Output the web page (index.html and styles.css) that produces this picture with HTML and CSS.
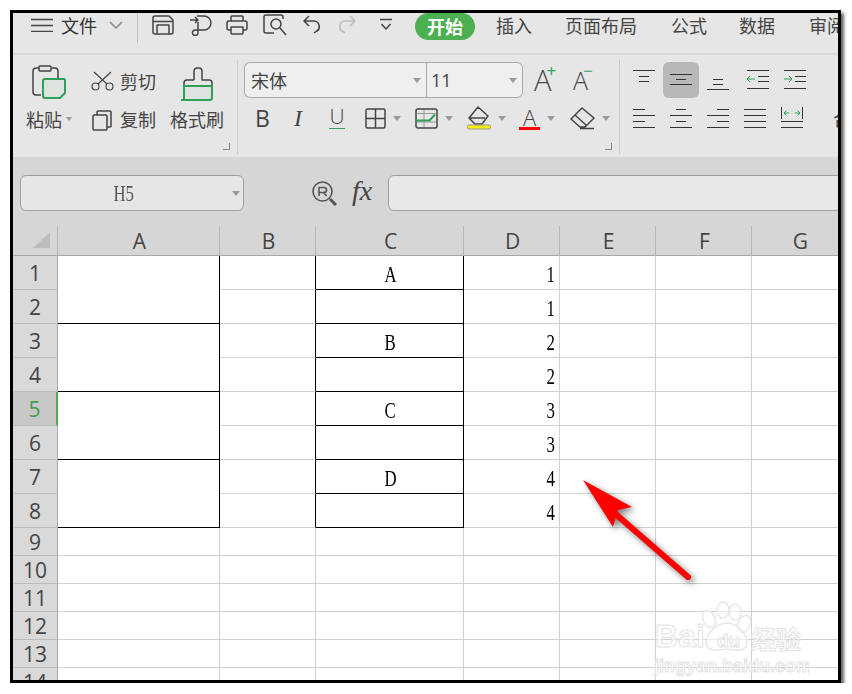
FILE: index.html
```html
<!DOCTYPE html>
<html lang="zh-CN">
<head>
<meta charset="utf-8">
<title>WPS 表格</title>
<link rel="stylesheet" href="styles.css">
</head>
<body>
<div class="frame">
  <header class="titlebar">
    <svg class="ic slot-menu" width="22" height="14" viewBox="0 0 22 14"><path d="M0 1.500h22M0 7.500h22M0 13.500h22"/></svg>
    <span class="file">文件</span>
    <svg class="ic soft" width="14" height="8" viewBox="0 0 14 8"><path d="M1 1l6 6 6-6"/></svg>
    <span class="title-sep"></span>
    <svg class="ic" width="22" height="20" viewBox="0 0 22 20"><path d="M3 1h14l4 4v12a2 2 0 0 1-2 2H3a2 2 0 0 1-2-2V3a2 2 0 0 1 2-2zM1.500 6.500h19M5 19v-9h12v9"/></svg>
    <svg class="ic" width="24" height="22" viewBox="0 0 24 22"><path d="M8 2h7a7 7 0 0 1 0 14H6a2.800 2.800 0 1 0 3 2.500V8M1 6h8M6 3l3 3-3 3"/></svg>
    <svg class="ic" width="22" height="20" viewBox="0 0 22 20"><path d="M5 6V2a1 1 0 0 1 1-1h10a1 1 0 0 1 1 1v4M5 15H3a2 2 0 0 1-2-2V8a2 2 0 0 1 2-2h16a2 2 0 0 1 2 2v5a2 2 0 0 1-2 2h-2M5 12h12v6a1 1 0 0 1-1 1H6a1 1 0 0 1-1-1z"/></svg>
    <svg class="ic" width="24" height="22" viewBox="0 0 24 22"><path d="M20 5V3a2 2 0 0 0-2-2H3a2 2 0 0 0-2 2v14a2 2 0 0 0 2 2h8"/><circle cx="13" cy="10" r="5"/><path d="M17 14l6 7"/></svg>
    <svg class="ic" width="18" height="19" viewBox="0 0 18 19"><path d="M6 1L1 6l5 5M1 6h10a5.500 5.500 0 0 1 2 10.500L11 18"/></svg>
    <svg class="ic faint" width="18" height="19" viewBox="0 0 18 19"><path d="M12 1l5 5-5 5M17 6H7a5.500 5.500 0 0 0-2 10.500L7 18"/></svg>
    <svg class="ic" width="12" height="14" viewBox="0 0 12 14"><path d="M0 1.500h12M1.500 6l4.500 5 4.500-5"/></svg>
    <span class="pill">开始</span>
    <span class="tab">插入</span>
    <span class="tab">页面布局</span>
    <span class="tab">公式</span>
    <span class="tab">数据</span>
    <span class="tab tab-cut">审阅</span>
  </header>

  <section class="ribbon">
    <div class="group group-clip">
      <svg class="ic big-paste" width="36" height="36" viewBox="0 0 36 36"><path d="M9 30H4a3 3 0 0 1-3-3V6a3 3 0 0 1 3-3h3M20 3h3a3 3 0 0 1 3 3v7M7 2a1 1 0 0 1 1-1h10a1 1 0 0 1 1 1v3a1 1 0 0 1-1 1H8a1 1 0 0 1-1-1z"/><path class="green" d="M13 14h19a1 1 0 0 1 1 1v13l-5 5H13a2 2 0 0 1-2-2V16a2 2 0 0 1 2-2z"/></svg>
      <div class="inline-tool"><svg class="ic thin" width="23" height="20" viewBox="0 0 23 20"><circle cx="4.500" cy="15.500" r="3.500"/><circle cx="18.500" cy="15.500" r="3.500"/><path d="M7 13L20 1M16 13L3 1"/></svg><span class="rb-text">剪切</span></div>
      <svg class="ic big-brush" width="34" height="34" viewBox="0 0 34 34"><path d="M13 13V4a3 3 0 0 1 3-3h2a3 3 0 0 1 3 3v9h7a3 3 0 0 1 3 3v3M13 13H6a3 3 0 0 0-3 3v3"/><path class="green" d="M3 19h28v12a2 2 0 0 1-2 2H3zM0 33h4"/></svg>
      <div class="paste-label"><span class="rb-text">粘贴</span><i class="caret caret-small"></i></div>
      <div class="inline-tool copy-tool"><svg class="ic" width="20" height="21" viewBox="0 0 20 21"><path d="M5 5V2a1 1 0 0 1 1-1h12a1 1 0 0 1 1 1v14a1 1 0 0 1-1 1h-3M2 5h12a1 1 0 0 1 1 1v13a1 1 0 0 1-1 1H2a1 1 0 0 1-1-1V6a1 1 0 0 1 1-1z"/></svg><span class="rb-text">复制</span></div>
      <span class="rb-text">格式刷</span>
      <span class="corner"></span>
    </div>

    <div class="group group-font">
      <div class="font-row">
        <div class="select select-font"><span>宋体</span><i class="caret"></i></div>
        <div class="select select-size"><span>11</span><i class="caret"></i></div>
        <span class="grow grow-up">A<sup class="grow-mark">+</sup></span>
        <span class="grow grow-down">A<sup class="grow-mark">−</sup></span>
      </div>
      <div class="format-row">
        <span class="fmt fmt-b">B</span>
        <span class="fmt fmt-i">I</span>
        <span class="fmt fmt-u">U</span>
        <div class="fmt-pair"><svg class="ic" width="21" height="21" viewBox="0 0 21 21"><rect x="1" y="1" width="19" height="19" rx="1.500"/><path d="M10.500 1v19M1 10.500h19"/></svg><i class="caret"></i></div>
        <div class="fmt-pair"><svg class="ic" width="23" height="21" viewBox="0 0 23 21"><path class="gridline" d="M9 1v19M2 5.500h19M2 14h19"/><path d="M16 20H3a2 2 0 0 1-2-2V3a2 2 0 0 1 2-2h17a2 2 0 0 1 2 2v15a2 2 0 0 1-2 2z"/><path class="green-line" d="M0 12.500h14.500L20 6.500"/></svg><i class="caret"></i></div>
        <div class="fmt-pair"><svg class="ic" width="24" height="24" viewBox="0 0 24 24"><path d="M11 1l10 9-6 8H8l-6-6zM2 12h16"/><rect class="yellow" x="0.500" y="19" width="23" height="4" rx="1.500"/></svg><i class="caret"></i></div>
        <div class="fmt-pair"><span class="fmt-color">A</span><i class="caret"></i></div>
        <div class="fmt-pair"><svg class="ic" width="25" height="23" viewBox="0 0 25 23"><path d="M12 1l12 10-9 9H10L1 12zM5 8l11 10M10 21.500h14"/></svg><i class="caret"></i></div>
      </div>
      <span class="corner"></span>
    </div>

    <div class="group-align">
      <div class="align-row">
        <svg class="al" width="36" height="36" viewBox="0 0 36 36"><path d="M7 8.500h22M13 14.500h10M13 19.500h10"/></svg>
        <svg class="al al-on" width="36" height="36" viewBox="0 0 36 36"><path d="M7 12.500h22M13 17.500h10M7 22.500h22"/></svg>
        <svg class="al" width="36" height="36" viewBox="0 0 36 36"><path d="M13 17.500h10M13 22.500h10M7 27.500h22"/></svg>
        <svg class="al al-gap" width="36" height="36" viewBox="0 0 36 36"><path d="M7 8.500h22M18 14.500h11M18 19.500h11M7 26.500h22"/><path class="green-thin" d="M7 17h8M10 14l-3 3 3 3"/></svg>
        <svg class="al" width="36" height="36" viewBox="0 0 36 36"><path d="M7 8.500h22M18 14.500h11M18 19.500h11M7 26.500h22"/><path class="green-thin" d="M7 17h8M12 14l3 3-3 3"/></svg>
      </div>
      <div class="align-row">
        <svg class="al" width="36" height="36" viewBox="0 0 36 36"><path d="M7 9.500h12M7 15.500h22M7 21.500h12M7 27.500h22"/></svg>
        <svg class="al" width="36" height="36" viewBox="0 0 36 36"><path d="M13 9.500h10M7 15.500h22M13 21.500h10M7 27.500h22"/></svg>
        <svg class="al" width="36" height="36" viewBox="0 0 36 36"><path d="M17 9.500h12M7 15.500h22M17 21.500h12M7 27.500h22"/></svg>
        <svg class="al" width="36" height="36" viewBox="0 0 36 36"><path d="M7 9.500h22M7 15.500h22M7 21.500h22M7 27.500h22"/></svg>
        <svg class="al" width="36" height="36" viewBox="0 0 36 36"><path d="M7.500 7v12M28.500 7v12M7 21.500h22M7 27.500h22"/><path class="green-thin" d="M10 13h5M12.500 10.500l-2.500 2.500 2.500 2.500M21 13h5M23.500 10.500l2.500 2.500-2.500 2.500"/></svg>
        <span class="merge-cut">合</span>
      </div>
    </div>
  </section>

  <section class="formula">
    <div class="namebox"><span class="name-val"><span class="narrow">H5</span></span><i class="caret"></i></div>
    <svg class="ic lens" width="25" height="25" viewBox="0 0 25 25"><circle cx="10.500" cy="10.500" r="9.500"/><path class="lens-h" d="M18 18l6 6"/><path d="M7 15V6.500h5a2.500 2.500 0 0 1 0 5H7M11.500 11.500L14.500 15"/></svg>
    <span class="fx">fx</span>
    <div class="fx-input"></div>
  </section>

  <table class="sheet">
    <colgroup><col class="c-h"><col class="c-a"><col class="c-n"><col class="c-c"><col class="c-n"><col class="c-n"><col class="c-n"><col class="c-n"></colgroup>
    <thead>
      <tr class="r-head"><th class="corner-cell"><i class="tri"></i></th><th>A</th><th>B</th><th>C</th><th>D</th><th>E</th><th>F</th><th>G</th></tr>
    </thead>
    <tbody>
      <tr class="r-big"><th>1</th><td class="ink" rowspan="2"></td><td class="ink-r"></td><td class="ink val-c"><span class="narrow">A</span></td><td class="val-n"><span class="narrow narrow-r">1</span></td><td></td><td></td><td></td></tr>
      <tr class="r-big"><th>2</th><td class="ink-r"></td><td class="ink"></td><td class="val-n"><span class="narrow narrow-r">1</span></td><td></td><td></td><td></td></tr>
      <tr class="r-big"><th>3</th><td class="ink" rowspan="2"></td><td class="ink-r"></td><td class="ink val-c"><span class="narrow">B</span></td><td class="val-n"><span class="narrow narrow-r">2</span></td><td></td><td></td><td></td></tr>
      <tr class="r-big"><th>4</th><td class="ink-r"></td><td class="ink"></td><td class="val-n"><span class="narrow narrow-r">2</span></td><td></td><td></td><td></td></tr>
      <tr class="r-big"><th class="row-on">5</th><td class="ink" rowspan="2"></td><td class="ink-r"></td><td class="ink val-c"><span class="narrow">C</span></td><td class="val-n"><span class="narrow narrow-r">3</span></td><td></td><td></td><td></td></tr>
      <tr class="r-big"><th>6</th><td class="ink-r"></td><td class="ink"></td><td class="val-n"><span class="narrow narrow-r">3</span></td><td></td><td></td><td></td></tr>
      <tr class="r-big"><th>7</th><td class="ink" rowspan="2"></td><td class="ink-r"></td><td class="ink val-c"><span class="narrow">D</span></td><td class="val-n"><span class="narrow narrow-r">4</span></td><td></td><td></td><td></td></tr>
      <tr class="r-big"><th>8</th><td class="ink-r"></td><td class="ink"></td><td class="val-n"><span class="narrow narrow-r">4</span></td><td></td><td></td><td></td></tr>
      <tr class="r-small"><th>9</th><td></td><td></td><td></td><td></td><td></td><td></td><td></td></tr>
      <tr class="r-small"><th>10</th><td></td><td></td><td></td><td></td><td></td><td></td><td></td></tr>
      <tr class="r-small"><th>11</th><td></td><td></td><td></td><td></td><td></td><td></td><td></td></tr>
      <tr class="r-small"><th>12</th><td></td><td></td><td></td><td></td><td></td><td></td><td></td></tr>
      <tr class="r-small"><th>13</th><td></td><td></td><td></td><td></td><td></td><td></td><td></td></tr>
      <tr class="r-small"><th>14</th><td></td><td></td><td></td><td></td><td></td><td></td><td></td></tr>
    </tbody>
  </table>

  <svg class="arrow" width="130" height="120" viewBox="0 0 130 120">
    <path class="arrow-line" d="M28 30L105 97"/>
    <path class="arrow-head" d="M0 0L49 27 35 30 30 47z"/>
  </svg>

  <svg class="mark" width="165" height="85" viewBox="0 0 165 85">
    <g class="paw">
      <ellipse cx="64" cy="24" rx="6" ry="9" transform="rotate(-25 64 24)"/>
      <ellipse cx="78" cy="15" rx="6" ry="8"/>
      <ellipse cx="90" cy="17" rx="6" ry="8"/>
      <ellipse cx="99" cy="29" rx="6" ry="9" transform="rotate(25 99 29)"/>
      <path d="M82 28c10 0 20 11 20 19 0 6-5 9-10 8-6-1-13-1-20 0-6 1-11-2-11-8 0-8 11-19 21-19z"/>
    </g>
    <text class="mk mk-bai" x="10" y="52">Bai</text>
    <text class="mk mk-du" x="72" y="52">du</text>
    <text class="mk mk-cn" x="106" y="54">经验</text>
    <text class="mk mk-url" x="9" y="77">jingyan.baidu.com</text>
  </svg>
</div>
</body>
</html>
```

FILE: styles.css
```css
* { box-sizing: border-box; }
html, body { margin: 0; padding: 0; background: #fff; }
body {
  font-family: "Noto Sans CJK SC", "Noto Sans", sans-serif;
  color: #444;
}
.frame {
  position: relative;
  width: 831px;
  height: 673px;
  margin: 10px 0 0 10px;
  border: 3px solid #000;
  box-shadow: 3px 3px 3px #666;
  overflow: hidden;
  background: #fff;
}

/* shared icon strokes */
.ic { fill: none; stroke: #444; stroke-width: 1.500; stroke-linejoin: round; display: block; }
.ic.soft { stroke: #888; }
.ic.faint { stroke: #bbb; }
.ic.thin { stroke-width: 1.200; }
.ic .green { fill: #dde3df; stroke: #2ea05a; stroke-width: 2; }
.ic .green-line { stroke: #2ea05a; stroke-width: 2; }
.ic .gridline { stroke: #999; stroke-width: 1; }
.ic .yellow { fill: #ffee00; stroke: #999; stroke-width: 1; }
.caret {
  display: block;
  flex: none;
  width: 0;
  height: 0;
  border-left: 4px solid transparent;
  border-right: 4px solid transparent;
  border-top: 5px solid #999;
}
.caret-small { border-left-width: 3.500px; border-right-width: 3.500px; border-top-width: 4px; }

/* title bar */
.titlebar {
  display: grid;
  grid-template-columns: 30px 48px 28px 15px 37px 37px 37px 40px 35px 42px 35px 81px 69px 106px 68px 70px 60px;
  grid-template-rows: 23px;
  align-items: center;
  height: 42px;
  padding: 0 0 17px 18px;
  background: #e6e6e6;
  border-bottom: 2px solid #d8d8d8;
  font-size: 18px;
  line-height: 23px;
}
.file { color: #333; margin-top: 2px; }
.title-sep { align-self: start; width: 1px; height: 30px; background: #c4c4c4; }
.pill {
  align-self: start;
  width: 60px;
  height: 27px;
  border-radius: 14px;
  background: #4caf50;
  color: #fff;
  font-weight: 700;
  text-align: center;
  line-height: 27px;
}
.tab { color: #444; white-space: nowrap; margin-top: 2px; }
.tab-cut { width: 60px; }

/* ribbon */
.ribbon { display: flex; height: 102px; background: #e6e6e6; }
.group {
  position: relative;
  height: 94px;
  margin-top: 5px;
  padding-top: 2px;
  border-right: 1px solid #ccc;
}
.corner {
  position: absolute;
  right: 7px;
  bottom: 4px;
  width: 7px;
  height: 7px;
  border-right: 1px solid #888;
  border-bottom: 1px solid #888;
}
.rb-text { font-size: 18px; line-height: 24px; color: #444; white-space: nowrap; }

.group-clip {
  display: grid;
  width: 225px;
  grid-template-columns: 78px 79px 67px;
  grid-template-rows: 38px 38px;
  align-items: center;
}
.big-paste { margin: 4px 0 0 19px; }
.big-brush { margin: 6px 0 0 11px; }
.inline-tool { display: flex; align-items: center; gap: 6px; }
.copy-tool { gap: 8px; margin-left: 1px; }
.copy-tool .ic { margin-top: 3px; }
.paste-label { display: flex; align-items: center; gap: 4px; padding-left: 13px; }

.group-font { width: 382px; padding-left: 6px; }
.font-row { display: flex; align-items: center; height: 36px; }
.select {
  display: flex;
  align-items: center;
  justify-content: space-between;
  flex: none;
  height: 36px;
  padding: 0 5px 0 6px;
  background: #efefef;
  border: 1px solid #aaa;
  font-size: 18px;
  color: #444;
}
.select-font { width: 182px; border-right: 0; border-radius: 6px 0 0 6px; }
.select-size { width: 97px; padding-left: 4px; border-radius: 0 6px 6px 0; font-family: "Open Sans", sans-serif; }
.grow {
  position: relative;
  font-family: "Open Sans", sans-serif;
  font-weight: 300;
  color: #444;
  line-height: 36px;
}
.grow-up { margin-left: 11px; width: 39px; font-size: 29px; }
.grow-down { font-size: 25px; }
.grow-mark {
  position: absolute;
  top: -1px;
  margin-left: -5px;
  font-size: 17px;
  font-weight: 400;
  line-height: 20px;
  color: #2ea05a;
}
.format-row {
  display: grid;
  grid-template-columns: 37px 37px 36px 50px 52px 52px 51px 45px;
  align-items: center;
  height: 34px;
  margin-top: 3px;
  padding-left: 11px;
}
.fmt { display: block; color: #444; line-height: 26px; }
.fmt-b { font-family: "Open Sans", sans-serif; font-size: 23px; font-weight: 500; }
.fmt-i { font-family: "Liberation Serif", serif; font-size: 24px; font-style: italic; padding-left: 2px; }
.fmt-u {
  width: 16px;
  height: 22px;
  font-family: "Open Sans", sans-serif;
  font-size: 21px;
  font-weight: 300;
  line-height: 19px;
  text-align: center;
  border-bottom: 1.500px solid #2ea05a;
}
.fmt-pair { display: flex; align-items: center; gap: 7px; }
.fmt-color {
  width: 21px;
  height: 23px;
  font-family: "Open Sans", sans-serif;
  font-size: 22px;
  font-weight: 300;
  line-height: 20px;
  text-align: center;
  color: #444;
  border-bottom: 3px solid #f00;
}

.group-align { flex: 1; padding: 7px 0 0 6px; overflow: hidden; }
.align-row { display: flex; align-items: center; gap: 1px; height: 36px; margin-bottom: 2px; }
.al { display: block; flex: none; fill: none; stroke: #333; stroke-width: 1; }
.al-on { background: #b8b8b8; border-radius: 6px; }
.al-gap { margin-left: 3px; }
.green-thin { stroke: #2ea05a; }
.merge-cut { margin-left: 22px; font-size: 18px; color: #444; white-space: nowrap; }

/* formula bar */
.formula {
  display: flex;
  align-items: flex-start;
  height: 69px;
  padding: 18px 0 0 7px;
  background: #d6d6d6;
}
.namebox {
  display: flex;
  flex: none;
  align-items: center;
  width: 224px;
  height: 36px;
  padding-right: 3px;
  background: #e6e6e6;
  border: 1px solid #a0a0a0;
  border-radius: 6px;
}
.name-val { flex: 1; text-align: center; font-family: "Liberation Serif", serif; font-size: 24px; line-height: 30px; color: #555; padding-right: 6px; }
.lens { flex: none; margin: 6px 0 0 68px; stroke: #555; stroke-width: 1.600; }
.lens .lens-h { stroke-width: 3; }
.fx {
  flex: none;
  width: 23px;
  margin: 1px 0 0 15px;
  font-family: "Liberation Serif", serif;
  font-style: italic;
  font-size: 28px;
  line-height: 30px;
  color: #444;
}
.fx-input {
  flex: none;
  width: 470px;
  height: 36px;
  margin-left: 13px;
  background: #e8e8e8;
  border: 1px solid #a0a0a0;
  border-radius: 6px;
}

/* sheet */
.sheet {
  width: 835px;
  table-layout: fixed;
  border-collapse: separate;
  border-spacing: 0;
}
.c-h { width: 45px; }
.c-a { width: 162px; }
.c-n { width: 96px; }
.c-c { width: 148px; }
.sheet th {
  padding: 0;
  font-family: "Open Sans", sans-serif;
  font-size: 21px;
  font-weight: 400;
  line-height: 24px;
  color: #444;
  text-align: center;
  background: #d9d9d9;
  border-right: 1px solid #aaa;
  border-bottom: 1px solid #bbb;
}
.r-head { height: 30px; }
.r-head th { padding-left: 2px; background: #d6d6d6; border-right-color: #b6b6b6; border-bottom-color: #a8a8a8; }
.r-big { height: 34px; }
.r-small { height: 28px; }
.sheet td {
  padding: 0;
  border-right: 1px solid #d0d0d0;
  border-bottom: 1px solid #d0d0d0;
  font-family: "Liberation Serif", serif;
  font-size: 24px;
  color: #000;
}
.sheet .ink { border-right-color: #000; border-bottom-color: #000; }
.sheet .ink-r { border-right-color: #000; }
.sheet .val-c { text-align: center; padding: 3px 0 0 2px; line-height: 26px; }
.sheet .val-n { text-align: right; padding: 3px 4px 0 0; line-height: 26px; }
.narrow { display: inline-block; transform: scaleX(.7); }
.narrow-r { transform-origin: right center; }
.sheet .row-on { background: #c8c8c8; color: #3f9e4a; border-right: 2px solid #4caf50; }
.corner-cell { position: relative; }
.tri {
  position: absolute;
  left: 20px;
  bottom: 7px;
  width: 0;
  height: 0;
  border-left: 17px solid transparent;
  border-bottom: 16px solid #bdbdbd;
}

/* overlays */
.arrow {
  position: absolute;
  left: 570px;
  top: 467px;
  filter: drop-shadow(3px 3px 3px rgba(0, 0, 0, .5));
}
.arrow-head { fill: #f00; }
.arrow-line { fill: none; stroke: #f00; stroke-width: 6; stroke-linecap: round; }
.mark { position: absolute; left: 632px; top: 582px; }
.paw { fill: rgba(255, 255, 255, .55); stroke: #e6e6e6; stroke-width: 1.500; }
.mk { fill: rgba(255, 255, 255, .6); stroke: #e4e4e4; stroke-width: 1; font-family: "Liberation Sans", sans-serif; font-weight: 700; }
.mk-bai { font-size: 32px; }
.mk-du { font-size: 19px; }
.mk-cn { font-size: 25px; font-family: "Noto Sans CJK SC", sans-serif; }
.mk-url { font-size: 18px; }
```
